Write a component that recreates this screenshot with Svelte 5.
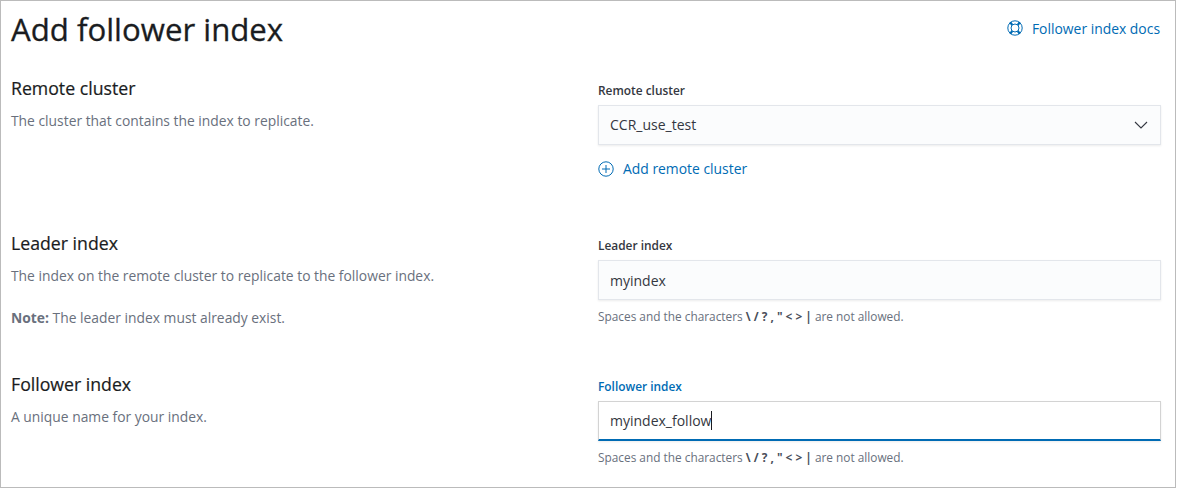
<script lang="ts">
  const restrictions = 'Spaces and the characters';
</script>

<div class="page">
  <header class="top">
    <h1>Add follower index</h1>
    <a class="link docs" href="#docs">
      <svg width="16" height="16" viewBox="0 0 16 16" fill="none" stroke="currentColor" stroke-width="1">
        <circle cx="8" cy="8" r="7.2" />
        <circle cx="8" cy="8" r="4" />
        <path d="M3.2 2.2 5.2 5M12.8 2.2 10.8 5M3.2 13.8 5.2 11M12.8 13.8 10.8 11" stroke-width="2.2" />
      </svg>
      Follower index docs
    </a>
  </header>

  <section class="row first">
    <div class="info">
      <h2>Remote cluster</h2>
      <p>The cluster that contains the index to replicate.</p>
    </div>
    <div class="control">
      <span class="label">Remote cluster</span>
      <div class="field select">
        <span>CCR_use_test</span>
        <svg width="14" height="8" viewBox="0 0 14 8" fill="none" stroke="#343741" stroke-width="1.1">
          <path d="M1 1 7 7 13 1" />
        </svg>
      </div>
      <a class="link add" href="#add">
        <svg width="16" height="16" viewBox="0 0 16 16" fill="none" stroke="currentColor" stroke-width="1">
          <circle cx="8" cy="8" r="7.2" />
          <path d="M8 4v8M4 8h8" />
        </svg>
        Add remote cluster
      </a>
    </div>
  </section>

  <section class="row second">
    <div class="info">
      <h2>Leader index</h2>
      <p>The index on the remote cluster to replicate to the follower index.</p>
      <p class="note"><strong>Note:</strong> The leader index must already exist.</p>
    </div>
    <div class="control">
      <span class="label">Leader index</span>
      <div class="field"><span>myindex</span></div>
      <p class="help">{restrictions} <b>\ / ? , " &lt; &gt; |</b> are not allowed.</p>
    </div>
  </section>

  <section class="row third">
    <div class="info">
      <h2>Follower index</h2>
      <p>A unique name for your index.</p>
    </div>
    <div class="control">
      <span class="label active">Follower index</span>
      <div class="field focused"><span class="caret">myindex_follow</span></div>
      <p class="help">{restrictions} <b>\ / ? , " &lt; &gt; |</b> are not allowed.</p>
    </div>
  </section>
</div>

<style>
  :global(body) {
    margin: 0;
    background: #fff;
  }

  .page {
    box-sizing: border-box;
    width: 1176px;
    height: 488px;
    border: 1px solid #bbb;
    padding: 0 15px 0 10px;
    font-family: "Open Sans", sans-serif;
    font-size: 14px;
    color: #343741;
    overflow: hidden;
  }

  .top {
    display: flex;
    justify-content: space-between;
    align-items: center;
    height: 56px;
    margin-bottom: 19px;
  }

  h1 {
    margin: 0;
    font-size: 31.2px;
    font-weight: 500;
    color: #1a1c21;
    line-height: 56px;
    -webkit-text-stroke: 0.3px #1a1c21;
  }

  h2 {
    margin: 0;
    font-size: 17.7px;
    font-weight: 500;
    line-height: 24px;
    color: #1a1c21;
    -webkit-text-stroke: 0.2px #1a1c21;
  }

  .link {
    display: flex;
    align-items: center;
    gap: 9px;
    color: #006bb4;
    text-decoration: none;
    font-size: 13.9px;
  }

  .docs { margin-bottom: 2px; }

  .row {
    display: grid;
    grid-template-columns: 587px 563px;
    box-sizing: border-box;
  }

  .first { height: 155px; }
  .second { height: 141px; }
  .third { height: 100px; }

  .control { padding-top: 4px; }

  .info p {
    margin: 11px 0 0;
    line-height: 20px;
    font-size: 13.85px;
    color: #69707d;
  }

  .info .note { margin-top: 22px; }

  .label {
    display: block;
    font-size: 11.9px;
    font-weight: 600;
    line-height: 20px;
    color: #343741;
    margin-bottom: 5px;
  }

  .label.active { color: #006bb4; }

  .field {
    box-sizing: border-box;
    height: 40px;
    display: flex;
    align-items: center;
    justify-content: space-between;
    padding: 0 12px 0 11px;
    background: #fbfcfd;
    border: 1px solid #e3e6eb;
    box-shadow: 0 1px 2px rgba(0, 0, 0, 0.08);
    font-size: 14px;
  }

  .select span { margin-bottom: 2px; }

  .focused {
    background: #fff;
    border: 1px solid #d3d3d3;
    border-bottom: 2px solid #006bb4;
  }

  .caret { border-right: 1px solid #1a1c21; }

  .add { margin-top: 14px; }

  .help {
    margin: 6px 0 0;
    font-size: 11.85px;
    line-height: 20px;
    color: #69707d;
  }

  .help b { font-weight: 700; color: #4a4f5a; }
</style>
